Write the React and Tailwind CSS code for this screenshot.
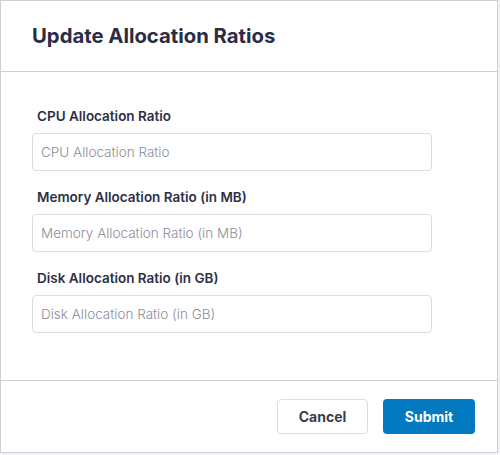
export default function App() {
  const fields = [
    "CPU Allocation Ratio",
    "Memory Allocation Ratio (in MB)",
    "Disk Allocation Ratio (in GB)",
  ];
  return (
    <div className="w-[500px] h-[455px] bg-[#f3f3f6] font-['Inter',sans-serif]">
      <div className="w-[498px] h-[453px] border border-[#cdcfd5] bg-white flex flex-col">
        <div className="h-[71px] border-b border-[#cdcfd5] flex items-center px-[31px]">
          <h2 className="text-[20.3px] font-bold text-[#2a2c44] tracking-[0px]">
            Update Allocation Ratios
          </h2>
        </div>
        <div className="flex-1 pt-[34px] px-[31px] flex flex-col gap-[16px]">
          {fields.map((f) => (
            <div key={f} className="flex flex-col gap-[7px]">
              <label className="h-[20px] leading-[20px] pl-[5px] text-[13.5px] font-semibold text-[#2d2f45]">
                {f}
              </label>
              <input
                placeholder={f}
                className="w-[400px] h-[38px] border border-[#dcdde2] rounded-[4px] px-[8px] text-[13.5px] font-light text-[#2d2f45] placeholder:text-[#8b8d9a] outline-none"
              />
            </div>
          ))}
        </div>
        <div className="h-[72px] border-t border-[#cdcfd5] flex items-center justify-end gap-[15px] pr-[22px]">
          <button className="w-[91px] h-[35px] rounded-[4px] border border-[#dcdde2] bg-white text-[14px] font-bold text-[#3a3c50]">
            Cancel
          </button>
          <button className="w-[92px] h-[35px] rounded-[4px] bg-[#0279c1] text-[14px] font-bold text-white">
            Submit
          </button>
        </div>
      </div>
    </div>
  );
}
